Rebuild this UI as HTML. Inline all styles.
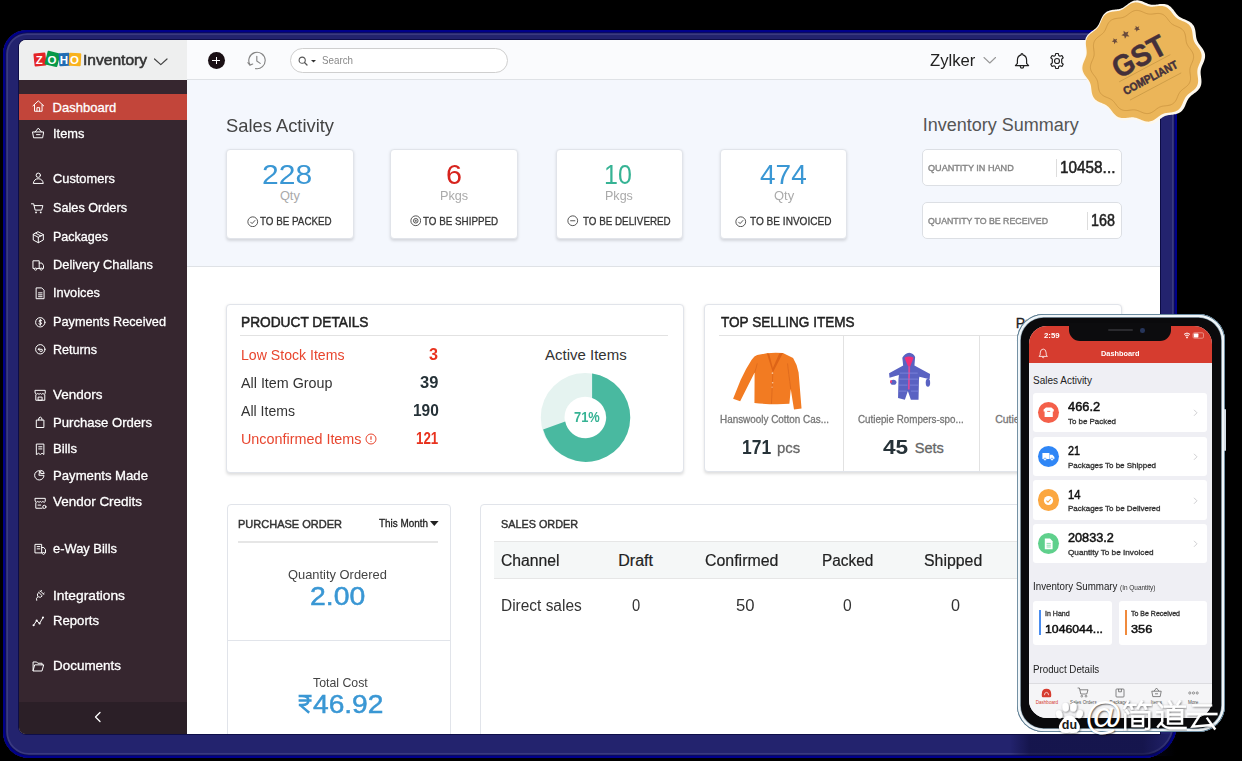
<!DOCTYPE html>
<html><head><meta charset="utf-8"><title>Zoho Inventory</title><style>
html,body{margin:0;padding:0;background:#000;}
body{width:1242px;height:761px;position:relative;overflow:hidden;font-family:"Liberation Sans",sans-serif;}
div,svg,span.t{position:absolute;box-sizing:border-box;}
span.t{white-space:nowrap;line-height:1;display:inline-block;}
</style></head>
<body>
<div style="left:3.00px;top:30.00px;width:1174.00px;height:728.00px;background:#23236e;border-radius:24px 20px 34px 26px;box-shadow:inset 0 0 0 2.2px #00008a, inset 0 0 0 3.2px #0c0c55, inset 0 0 0 5px #3a3a80;"></div>
<div id="win" style="left:19px;top:39.5px;width:1141px;height:694.3px;overflow:hidden;background:#fff;border-radius:7px 0 0 7px;box-shadow:0 0 0 0.8px #08083c;"><div style="left:168.00px;top:40.00px;width:974.00px;height:187.00px;background:#f4f7fd;"></div>
<div style="left:168.00px;top:226.50px;width:974.00px;height:1.00px;background:#dfe2e6;"></div>
<div style="left:0.00px;top:0.00px;width:168.00px;height:40.00px;background:#eeefef;"></div>
<div style="left:168.00px;top:0.00px;width:974.00px;height:40.60px;background:#fafbfd;border-bottom:1.6px solid #dfe2e6;"></div>
<div style="left:0.00px;top:40.00px;width:168.00px;height:655.00px;background:#36262f;"></div>
<div style="left:0.00px;top:54.50px;width:168.00px;height:26.00px;background:#c2453a;"></div>
<div style="left:0.00px;top:662.30px;width:168.00px;height:33.00px;background:#2b1f27;"></div>
<svg style="left:74.00px;top:671.50px;" width="10" height="12" viewBox="0 0 10 12"><path d="M7 1.5 L2.5 6 L7 10.5" fill="none" stroke="#fff" stroke-width="1.3" stroke-linecap="round" stroke-linejoin="round"/></svg>
<span id="t0" class="t" style="left:33.60px;transform-origin:0 50%;top:61.05px;font-size:13px;color:#fff;font-weight:normal;-webkit-text-stroke:0.3px;">Dashboard</span>
<svg style="left:13.20px;top:60.60px;" width="12.6" height="12.6" viewBox="0 0 14 14"><path fill="none" stroke="#fff" stroke-width="1.1" stroke-linecap="round" stroke-linejoin="round" d="M1 6.5 L7 1 L13 6.5 M2.8 5.5 V12.5 H11.2 V5.5 M5.5 12.5 V8.5 H8.5 V12.5"/></svg>
<span id="t1" class="t" style="left:33.60px;transform-origin:0 50%;top:87.45px;font-size:13px;color:#fff;font-weight:normal;-webkit-text-stroke:0.3px;transform:scaleX(0.9875);">Items</span>
<svg style="left:12.90px;top:87.20px;" width="12.6" height="12.6" viewBox="0 0 14 14"><path fill="none" stroke="#fff" stroke-width="1.1" stroke-linecap="round" stroke-linejoin="round" d="M1 5.5 H13 L11.8 12 H2.2 Z M3.5 5.5 L7 1.2 L10.5 5.5 M5 8.5 H9"/></svg>
<span id="t2" class="t" style="left:33.60px;transform-origin:0 50%;top:132.85px;font-size:13px;color:#fff;font-weight:normal;-webkit-text-stroke:0.3px;transform:scaleX(0.9863);">Customers</span>
<svg style="left:12.90px;top:132.50px;" width="12.6" height="12.6" viewBox="0 0 14 14"><circle fill="none" stroke="#fff" stroke-width="1.1" stroke-linecap="round" stroke-linejoin="round" cx="7" cy="3.6" r="2.4"/><path fill="none" stroke="#fff" stroke-width="1.1" stroke-linecap="round" stroke-linejoin="round" d="M1.5 12.3 Q2.3 7.5 7 7.5 Q11.7 7.5 12.5 12.3 Z"/></svg>
<span id="t3" class="t" style="left:33.60px;transform-origin:0 50%;top:161.85px;font-size:13px;color:#fff;font-weight:normal;-webkit-text-stroke:0.3px;transform:scaleX(0.9753);">Sales Orders</span>
<svg style="left:12.10px;top:162.70px;" width="12.6" height="12.6" viewBox="0 0 14 14"><path fill="none" stroke="#fff" stroke-width="1.1" stroke-linecap="round" stroke-linejoin="round" d="M0.5 2 H3 L4.6 9 H11.8 L13.2 4 H3.5"/><circle cx="5.6" cy="11.6" r="1" fill="#fff"/><circle cx="10.8" cy="11.6" r="1" fill="#fff"/></svg>
<span id="t4" class="t" style="left:33.60px;transform-origin:0 50%;top:190.25px;font-size:13px;color:#fff;font-weight:normal;-webkit-text-stroke:0.3px;transform:scaleX(0.9633);">Packages</span>
<svg style="left:13.40px;top:191.70px;" width="12.6" height="12.6" viewBox="0 0 14 14"><path fill="none" stroke="#fff" stroke-width="1.1" stroke-linecap="round" stroke-linejoin="round" d="M7 1 L12.6 4 V10 L7 13 L1.4 10 V4 Z M1.4 4 L7 7 L12.6 4 M7 7 V13 M4.2 2.5 L9.8 5.5"/></svg>
<span id="t5" class="t" style="left:33.60px;transform-origin:0 50%;top:218.95px;font-size:13px;color:#fff;font-weight:normal;-webkit-text-stroke:0.3px;transform:scaleX(0.9886);">Delivery Challans</span>
<svg style="left:13.40px;top:219.70px;" width="12.6" height="12.6" viewBox="0 0 14 14"><path fill="none" stroke="#fff" stroke-width="1.1" stroke-linecap="round" stroke-linejoin="round" d="M1.5 2 H8 V10.5 H1.5 Z M8 4.5 H11 L12.8 7.2 V10.5 H8"/><circle cx="4" cy="11.3" r="1.2" fill="#36262f" stroke="#fff"/><circle cx="10.3" cy="11.3" r="1.2" fill="#36262f" stroke="#fff"/></svg>
<span id="t6" class="t" style="left:33.60px;transform-origin:0 50%;top:246.45px;font-size:13px;color:#fff;font-weight:normal;-webkit-text-stroke:0.3px;transform:scaleX(0.9853);">Invoices</span>
<svg style="left:14.70px;top:247.50px;" width="12.6" height="12.6" viewBox="0 0 14 14"><path fill="none" stroke="#fff" stroke-width="1.1" stroke-linecap="round" stroke-linejoin="round" d="M2.8 1 H8.6 L11.2 3.6 V13 H2.8 Z M5 6.5 H9 M5 8.7 H9 M5 10.8 H9"/></svg>
<span id="t7" class="t" style="left:33.60px;transform-origin:0 50%;top:275.45px;font-size:13px;color:#fff;font-weight:normal;-webkit-text-stroke:0.3px;transform:scaleX(0.9773);">Payments Received</span>
<svg style="left:14.90px;top:276.30px;" width="12.6" height="12.6" viewBox="0 0 14 14"><circle fill="none" stroke="#fff" stroke-width="1.1" stroke-linecap="round" stroke-linejoin="round" cx="7" cy="7" r="5.2"/><path fill="none" stroke="#fff" stroke-width="1.1" stroke-linecap="round" stroke-linejoin="round" d="M8.6 5.2 Q7 4 5.8 5.2 Q5.2 6.6 7 7 Q8.8 7.4 8.2 8.8 Q7 10 5.4 8.8 M7 3.6 V10.4"/></svg>
<span id="t8" class="t" style="left:33.60px;transform-origin:0 50%;top:303.15px;font-size:13px;color:#fff;font-weight:normal;-webkit-text-stroke:0.3px;transform:scaleX(0.9664);">Returns</span>
<svg style="left:14.90px;top:303.60px;" width="12.6" height="12.6" viewBox="0 0 14 14"><circle fill="none" stroke="#fff" stroke-width="1.1" stroke-linecap="round" stroke-linejoin="round" cx="7" cy="7" r="5.2"/><path fill="none" stroke="#fff" stroke-width="1.1" stroke-linecap="round" stroke-linejoin="round" d="M4.8 7 H9 Q10 8 9 9.2 H7 M6 5.6 L4.6 7 L6 8.4"/></svg>
<span id="t9" class="t" style="left:33.60px;transform-origin:0 50%;top:348.95px;font-size:13px;color:#fff;font-weight:normal;-webkit-text-stroke:0.3px;transform:scaleX(1.0356);">Vendors</span>
<svg style="left:14.90px;top:349.50px;" width="12.6" height="12.6" viewBox="0 0 14 14"><path fill="none" stroke="#fff" stroke-width="1.1" stroke-linecap="round" stroke-linejoin="round" d="M2 6.5 V12.5 H12 V6.5 M1.5 1.5 H12.5 V5 Q11.5 6.8 9.8 5 Q8.4 6.8 7 5 Q5.6 6.8 4.2 5 Q2.5 6.8 1.5 5 Z M5 9 H9 V12.5 H5 Z"/></svg>
<span id="t10" class="t" style="left:33.60px;transform-origin:0 50%;top:376.05px;font-size:13px;color:#fff;font-weight:normal;-webkit-text-stroke:0.3px;transform:scaleX(1.0075);">Purchase Orders</span>
<svg style="left:14.70px;top:376.30px;" width="12.6" height="12.6" viewBox="0 0 14 14"><path fill="none" stroke="#fff" stroke-width="1.1" stroke-linecap="round" stroke-linejoin="round" d="M3 4.5 H11 V12.8 H3 Z M5 4.5 Q5 1.2 7 1.2 Q9 1.2 9 4.5"/></svg>
<span id="t11" class="t" style="left:33.60px;transform-origin:0 50%;top:402.75px;font-size:13px;color:#fff;font-weight:normal;-webkit-text-stroke:0.3px;transform:scaleX(1.0066);">Bills</span>
<svg style="left:14.50px;top:403.00px;" width="12.6" height="12.6" viewBox="0 0 14 14"><path fill="none" stroke="#fff" stroke-width="1.1" stroke-linecap="round" stroke-linejoin="round" d="M3 1.2 H11 V12.8 L9 11.4 L7 12.8 L5 11.4 L3 12.8 Z M5.2 4.2 H8.8 M5.2 6.6 H8.8"/></svg>
<span id="t12" class="t" style="left:33.60px;transform-origin:0 50%;top:429.25px;font-size:13px;color:#fff;font-weight:normal;-webkit-text-stroke:0.3px;transform:scaleX(1.0113);">Payments Made</span>
<svg style="left:14.20px;top:429.50px;" width="12.6" height="12.6" viewBox="0 0 14 14"><path fill="none" stroke="#fff" stroke-width="1.1" stroke-linecap="round" stroke-linejoin="round" d="M7 1.8 A5.2 5.2 0 1 0 12.2 7 H7 Z M9 1.5 A4 4 0 0 1 12.5 5 H9 Z"/></svg>
<span id="t13" class="t" style="left:33.60px;transform-origin:0 50%;top:455.95px;font-size:13px;color:#fff;font-weight:normal;-webkit-text-stroke:0.3px;transform:scaleX(1.0349);">Vendor Credits</span>
<svg style="left:15.20px;top:457.20px;" width="12.6" height="12.6" viewBox="0 0 14 14"><path fill="none" stroke="#fff" stroke-width="1.1" stroke-linecap="round" stroke-linejoin="round" d="M2 6.5 V12.5 H9 M1.5 1.5 H12.5 V5 Q11.5 6.8 9.8 5 Q8.4 6.8 7 5 Q5.6 6.8 4.2 5 Q2.5 6.8 1.5 5 Z M4.5 9 H7.5"/><circle fill="none" stroke="#fff" stroke-width="1.1" stroke-linecap="round" stroke-linejoin="round" cx="11.5" cy="11" r="1.8"/></svg>
<span id="t14" class="t" style="left:33.60px;transform-origin:0 50%;top:502.45px;font-size:13px;color:#fff;font-weight:normal;-webkit-text-stroke:0.3px;transform:scaleX(0.9918);">e-Way Bills</span>
<svg style="left:15.20px;top:503.10px;" width="12.6" height="12.6" viewBox="0 0 14 14"><path fill="none" stroke="#fff" stroke-width="1.1" stroke-linecap="round" stroke-linejoin="round" d="M1.5 1.5 H8.5 V11 H1.5 Z M8.5 5 H11 L12.8 7.5 V11 H8.5 M3.5 4 H6.5 M3.5 6.5 H6.5"/><circle cx="10.6" cy="11.6" r="1.1" fill="#36262f" stroke="#fff"/></svg>
<span id="t15" class="t" style="left:33.60px;transform-origin:0 50%;top:549.05px;font-size:13px;color:#fff;font-weight:normal;-webkit-text-stroke:0.3px;transform:scaleX(1.0598);">Integrations</span>
<svg style="left:14.10px;top:549.30px;" width="12.6" height="12.6" viewBox="0 0 14 14"><path fill="none" stroke="#fff" stroke-width="1.1" stroke-linecap="round" stroke-linejoin="round" d="M8.2 2.2 L11.8 5.8 M6.5 3.8 L10.2 7.5 Q9 10.2 6 8.8 L5.2 8 Q3.8 5 6.5 3.8 M9.4 1.5 L8.2 2.8 M12.5 4.6 L11.3 5.8 M5.2 8.8 Q3 10 4 12.6"/></svg>
<span id="t16" class="t" style="left:33.60px;transform-origin:0 50%;top:574.65px;font-size:13px;color:#fff;font-weight:normal;-webkit-text-stroke:0.3px;transform:scaleX(1.0103);">Reports</span>
<svg style="left:13.00px;top:575.10px;" width="12.6" height="12.6" viewBox="0 0 14 14"><path fill="none" stroke="#fff" stroke-width="1.1" stroke-linecap="round" stroke-linejoin="round" d="M1.8 11.4 L5.2 6.2 L8.4 9.4 L12.2 2.8"/><circle cx="1.8" cy="11.4" r="1.2" fill="#fff"/><circle cx="5.2" cy="6.2" r="1.2" fill="#fff"/><circle cx="8.4" cy="9.4" r="1.2" fill="#fff"/><circle cx="12.2" cy="2.8" r="1.2" fill="#fff"/></svg>
<span id="t17" class="t" style="left:33.60px;transform-origin:0 50%;top:619.85px;font-size:13px;color:#fff;font-weight:normal;-webkit-text-stroke:0.3px;transform:scaleX(1.0342);">Documents</span>
<svg style="left:13.00px;top:620.30px;" width="12.6" height="12.6" viewBox="0 0 14 14"><path fill="none" stroke="#fff" stroke-width="1.1" stroke-linecap="round" stroke-linejoin="round" d="M1.2 11.8 V2.2 H5.2 L6.4 3.6 H11.2 V5.4 M1.2 11.8 L3 5.4 H13 L11.2 11.8 Z"/></svg>
<div style="left:14.70px;top:13.70px;width:12.20px;height:13.20px;background:#e42527;transform:rotate(-6deg);border-radius:1px;"></div>
<div style="left:26.60px;top:12.10px;width:13.40px;height:13.60px;background:#089949;transform:rotate(14deg);border-radius:1px;"></div>
<div style="left:39.60px;top:13.50px;width:10.80px;height:13.00px;background:#226db4;transform:rotate(-4deg);border-radius:1px;"></div>
<div style="left:49.80px;top:13.90px;width:11.80px;height:13.00px;background:#f9b21d;transform:rotate(3deg);border-radius:1px;"></div>
<span id="t18" class="t" style="left:16.80px;transform-origin:0 50%;top:15.13px;font-size:11.5px;color:#fff;font-weight:bold;">Z</span>
<span id="t19" class="t" style="left:28.60px;transform-origin:0 50%;top:15.13px;font-size:11.5px;color:#fff;font-weight:bold;">O</span>
<span id="t20" class="t" style="left:40.70px;transform-origin:0 50%;top:15.13px;font-size:11.5px;color:#fff;font-weight:bold;">H</span>
<span id="t21" class="t" style="left:51.10px;transform-origin:0 50%;top:15.13px;font-size:11.5px;color:#fff;font-weight:bold;">O</span>
<span id="t22" class="t" style="left:64.00px;transform-origin:0 50%;top:12.75px;font-size:15px;color:#333;font-weight:normal;-webkit-text-stroke:0.3px;transform:scaleX(1.0372);-webkit-text-stroke:0.55px;">Inventory</span>
<svg style="left:134.00px;top:17.50px;" width="16" height="10" viewBox="0 0 16 10"><path d="M1.5 2 L7.8 7.6 L14 2" fill="none" stroke="#444" stroke-width="1.2" stroke-linecap="round" stroke-linejoin="round"/></svg>
<div style="left:188.95px;top:12.65px;width:16.90px;height:16.90px;background:#1a1015;border-radius:50%;"></div>
<div style="left:193.40px;top:20.40px;width:7.80px;height:1.30px;background:#fff;"></div>
<div style="left:196.65px;top:17.10px;width:1.30px;height:7.80px;background:#fff;"></div>
<svg style="left:228.00px;top:11.50px;" width="20" height="19" viewBox="0 0 20 19"><path d="M2.9 13.6 A8.2 8.2 0 1 1 8.58 17.58" fill="none" stroke="#858585" stroke-width="1.15" stroke-linecap="round"/><path d="M0.9 11.6 L2.9 14.1 L5.7 13" fill="none" stroke="#858585" stroke-width="1.15" stroke-linecap="round" stroke-linejoin="round"/><path d="M9.8 5.2 V10 L13.2 12.4" fill="none" stroke="#858585" stroke-width="1.15" stroke-linecap="round" stroke-linejoin="round"/></svg>
<div style="left:271.00px;top:8.50px;width:218.20px;height:25.00px;background:#fff;border:1px solid #cfcfcf;border-radius:13px;"></div>
<svg style="left:279.00px;top:16.00px;" width="10" height="10" viewBox="0 0 10 10"><circle cx="4.2" cy="4.2" r="3.1" fill="none" stroke="#555" stroke-width="1.1"/><path d="M6.5 6.5 L9 9" stroke="#555" stroke-width="1.3" stroke-linecap="round"/></svg>
<svg style="left:291.50px;top:20.10px;" width="5" height="3" viewBox="0 0 5 3"><path d="M0 0 H5 L2.5 2.6 Z" fill="#333"/></svg>
<span id="t23" class="t" style="left:303.40px;transform-origin:0 50%;top:15.88px;font-size:10.5px;color:#888;font-weight:normal;transform:scaleX(0.9315);">Search</span>
<span id="t24" class="t" style="left:910.50px;transform-origin:0 50%;top:12.48px;font-size:16.5px;color:#222;font-weight:normal;transform:scaleX(1.0106);">Zylker</span>
<svg style="left:963.50px;top:16.50px;" width="14" height="9" viewBox="0 0 14 9"><path d="M1 1.5 L6.8 7 L12.5 1.5" fill="none" stroke="#999" stroke-width="1.1" stroke-linecap="round" stroke-linejoin="round"/></svg>
<svg style="left:994.00px;top:12.00px;" width="18" height="18" viewBox="0 0 18 18"><path d="M9 1.6 Q9.9 1.6 9.9 2.8 Q13.6 3.8 13.6 8.2 V11.4 L15.6 13.6 H2.4 L4.4 11.4 V8.2 Q4.4 3.8 8.1 2.8 Q8.1 1.6 9 1.6 Z M7.2 14.2 Q7.4 16.2 9 16.2 Q10.6 16.2 10.8 14.2" fill="none" stroke="#222" stroke-width="1.2" stroke-linejoin="round"/></svg>
<svg style="left:1028.70px;top:12.00px;" width="18" height="18" viewBox="0 0 18 18"><g fill="none" stroke="#222" stroke-width="1.2" stroke-linejoin="round"><circle cx="9" cy="9" r="2.5"/><path d="M7.7 1.5 H10.3 L10.7 3.5 L12 4.2 L13.9 3.5 L15.2 5.7 L13.7 7.1 V8.6 V10.9 L15.2 12.3 L13.9 14.5 L12 13.8 L10.7 14.5 L10.3 16.5 H7.7 L7.3 14.5 L6 13.8 L4.1 14.5 L2.8 12.3 L4.3 10.9 V7.1 L2.8 5.7 L4.1 3.5 L6 4.2 L7.3 3.5 Z"/></g></svg>
<span id="t25" class="t" style="left:207.00px;transform-origin:0 50%;top:77.38px;font-size:18.5px;color:#444;font-weight:normal;transform:scaleX(0.9908);">Sales Activity</span>
<div style="left:206.50px;top:109.50px;width:128.80px;height:89.70px;background:#fff;border:1px solid #e1e4ea;border-radius:4px;box-shadow:0 1.5px 3px rgba(0,0,0,.13);"></div>
<span id="t26" class="t" style="left:243.00px;transform-origin:0 50%;top:121.72px;font-size:27.5px;color:#3a97d4;font-weight:normal;transform:scaleX(1.0939);">228</span>
<span id="t27" class="t" style="left:260.90px;transform-origin:0 50%;top:150.92px;font-size:12.8px;color:#aaa;font-weight:normal;">Qty</span>
<span id="t28" class="t" style="left:241.00px;transform-origin:0 50%;top:175.64px;font-size:11.6px;color:#333;font-weight:normal;-webkit-text-stroke:0.3px;transform:scaleX(0.8473);">TO BE PACKED</span>
<svg style="left:228.00px;top:176.30px;" width="11.5" height="11.5" viewBox="0 0 11.5 11.5"><circle cx="5.75" cy="5.75" r="4.9" fill="none" stroke="#444" stroke-width="0.9"/><path d="M3.4 5.9 L5.1 7.6 L8.2 4.2" fill="none" stroke="#444" stroke-width="0.9"/></svg>
<div style="left:370.70px;top:109.50px;width:128.80px;height:89.70px;background:#fff;border:1px solid #e1e4ea;border-radius:4px;box-shadow:0 1.5px 3px rgba(0,0,0,.13);"></div>
<span id="t29" class="t" style="left:427.00px;transform-origin:0 50%;top:121.72px;font-size:27.5px;color:#d7231d;font-weight:normal;transform:scaleX(1.0460);">6</span>
<span id="t30" class="t" style="left:421.00px;transform-origin:0 50%;top:150.92px;font-size:12.8px;color:#aaa;font-weight:normal;transform:scaleX(0.9911);">Pkgs</span>
<span id="t31" class="t" style="left:403.50px;transform-origin:0 50%;top:175.24px;font-size:11.6px;color:#333;font-weight:normal;-webkit-text-stroke:0.3px;transform:scaleX(0.8478);">TO BE SHIPPED</span>
<svg style="left:390.80px;top:175.90px;" width="11.5" height="11.5" viewBox="0 0 11.5 11.5"><circle cx="5.75" cy="5.75" r="4.9" fill="none" stroke="#444" stroke-width="0.9"/><circle cx="5.75" cy="5.75" r="2.3" fill="none" stroke="#444" stroke-width="0.9"/><path d="M4.6 5.8 H6.9 M5.75 4.6 V6.9" stroke="#444" stroke-width="0.7"/></svg>
<div style="left:536.50px;top:109.50px;width:127.70px;height:89.70px;background:#fff;border:1px solid #e1e4ea;border-radius:4px;box-shadow:0 1.5px 3px rgba(0,0,0,.13);"></div>
<span id="t32" class="t" style="left:584.90px;transform-origin:0 50%;top:121.72px;font-size:27.5px;color:#36b394;font-weight:normal;transform:scaleX(0.9087);">10</span>
<span id="t33" class="t" style="left:585.60px;transform-origin:0 50%;top:150.92px;font-size:12.8px;color:#aaa;font-weight:normal;transform:scaleX(0.9806);">Pkgs</span>
<span id="t34" class="t" style="left:563.50px;transform-origin:0 50%;top:175.14px;font-size:11.6px;color:#333;font-weight:normal;-webkit-text-stroke:0.3px;transform:scaleX(0.8471);">TO BE DELIVERED</span>
<svg style="left:548.40px;top:175.80px;" width="11.5" height="11.5" viewBox="0 0 11.5 11.5"><circle cx="5.75" cy="5.75" r="4.9" fill="none" stroke="#444" stroke-width="0.9"/><path d="M3.2 5.75 H8.3" stroke="#444" stroke-width="0.9"/></svg>
<div style="left:700.90px;top:109.50px;width:127.50px;height:89.70px;background:#fff;border:1px solid #e1e4ea;border-radius:4px;box-shadow:0 1.5px 3px rgba(0,0,0,.13);"></div>
<span id="t35" class="t" style="left:741.00px;transform-origin:0 50%;top:121.72px;font-size:27.5px;color:#3a97d4;font-weight:normal;transform:scaleX(1.0176);">474</span>
<span id="t36" class="t" style="left:755.30px;transform-origin:0 50%;top:150.92px;font-size:12.8px;color:#aaa;font-weight:normal;transform:scaleX(1.0140);">Qty</span>
<span id="t37" class="t" style="left:730.90px;transform-origin:0 50%;top:175.64px;font-size:11.6px;color:#333;font-weight:normal;-webkit-text-stroke:0.3px;transform:scaleX(0.8685);">TO BE INVOICED</span>
<svg style="left:716.30px;top:176.30px;" width="11.5" height="11.5" viewBox="0 0 11.5 11.5"><circle cx="5.75" cy="5.75" r="4.9" fill="none" stroke="#444" stroke-width="0.9"/><path d="M3.4 5.9 L5.1 7.6 L8.2 4.2" fill="none" stroke="#444" stroke-width="0.9"/></svg>
<span id="t38" class="t" style="left:903.80px;transform-origin:0 50%;top:76.70px;font-size:18px;color:#555;font-weight:normal;">Inventory Summary</span>
<div style="left:903.40px;top:109.80px;width:199.30px;height:36.60px;background:#fff;border:1px solid #dcdfe4;border-radius:5px;"></div>
<div style="left:903.40px;top:162.70px;width:199.30px;height:36.60px;background:#fff;border:1px solid #dcdfe4;border-radius:5px;"></div>
<span id="t39" class="t" style="left:908.80px;transform-origin:0 50%;top:123.67px;font-size:9.8px;color:#858585;font-weight:normal;-webkit-text-stroke:0.3px;transform:scaleX(0.9279);-webkit-text-stroke:0.4px;">QUANTITY IN HAND</span>
<span id="t40" class="t" style="left:908.80px;transform-origin:0 50%;top:176.27px;font-size:9.8px;color:#858585;font-weight:normal;-webkit-text-stroke:0.3px;transform:scaleX(0.8959);-webkit-text-stroke:0.4px;">QUANTITY TO BE RECEIVED</span>
<div style="left:1037.20px;top:119.50px;width:1.00px;height:17.50px;background:#ddd;"></div>
<div style="left:1068.00px;top:172.50px;width:1.00px;height:17.50px;background:#ddd;"></div>
<span id="t41" class="t" style="left:1040.80px;transform-origin:0 50%;top:120.60px;font-size:16px;color:#222;font-weight:normal;-webkit-text-stroke:0.3px;transform:scaleX(0.9580);-webkit-text-stroke:0.5px;">10458...</span>
<span id="t42" class="t" style="left:1072.30px;transform-origin:0 50%;top:173.10px;font-size:16px;color:#222;font-weight:normal;-webkit-text-stroke:0.3px;transform:scaleX(0.8950);-webkit-text-stroke:0.5px;">168</span>
<div style="left:206.60px;top:264.90px;width:458.80px;height:168.20px;background:#fff;border:1px solid #e1e4ea;border-radius:4px;box-shadow:0 1.5px 3px rgba(0,0,0,.13);"></div>
<span id="t43" class="t" style="left:221.50px;transform-origin:0 50%;top:275.70px;font-size:14.7px;color:#222;font-weight:normal;-webkit-text-stroke:0.3px;transform:scaleX(0.9336);-webkit-text-stroke:0.5px;">PRODUCT DETAILS</span>
<div style="left:221.00px;top:295.10px;width:428.00px;height:1.00px;background:#e2e2e2;"></div>
<span id="t44" class="t" style="left:221.50px;transform-origin:0 50%;top:307.25px;font-size:15px;color:#e8452e;font-weight:normal;transform:scaleX(0.9405);">Low Stock Items</span>
<span id="t45" class="t" style="left:410.30px;transform-origin:0 50%;top:307.10px;font-size:16px;color:#e8321e;font-weight:bold;transform:scaleX(1.0105);">3</span>
<span id="t46" class="t" style="left:221.50px;transform-origin:0 50%;top:335.75px;font-size:15px;color:#333;font-weight:normal;transform:scaleX(0.9544);">All Item Group</span>
<span id="t47" class="t" style="left:401.00px;transform-origin:0 50%;top:335.60px;font-size:16px;color:#263238;font-weight:bold;transform:scaleX(1.0283);">39</span>
<span id="t48" class="t" style="left:221.50px;transform-origin:0 50%;top:363.55px;font-size:15px;color:#333;font-weight:normal;transform:scaleX(0.9389);">All Items</span>
<span id="t49" class="t" style="left:393.50px;transform-origin:0 50%;top:363.40px;font-size:16px;color:#263238;font-weight:bold;transform:scaleX(0.9662);">190</span>
<span id="t50" class="t" style="left:221.50px;transform-origin:0 50%;top:391.55px;font-size:15px;color:#e8452e;font-weight:normal;transform:scaleX(0.9573);">Unconfirmed Items</span>
<span id="t51" class="t" style="left:397.00px;transform-origin:0 50%;top:391.40px;font-size:16px;color:#e8321e;font-weight:bold;transform:scaleX(0.8351);">121</span>
<svg style="left:346.30px;top:393.50px;" width="12" height="12" viewBox="0 0 12 12"><circle cx="6" cy="6" r="5" fill="none" stroke="#e8452e" stroke-width="1"/><path d="M6 3.2 V6.8 M6 8.2 V9" stroke="#e8452e" stroke-width="1.2"/></svg>
<span id="t52" class="t" style="left:526.00px;transform-origin:0 50%;top:307.25px;font-size:15px;color:#333;font-weight:normal;">Active Items</span>
<svg style="left:521.00px;top:332.50px;" width="91" height="91" viewBox="0 0 91 91"><circle cx="45.2" cy="45.4" r="32.55" fill="none" stroke="#e5f3f0" stroke-width="23.7"/><path d="M52.1 1.54 A44.4 44.4 0 1 1 3.1 57.5 L25.2 49.6 A20.7 20.7 0 1 0 52.1 25.9 Z" fill="#49b9a0"/></svg>
<span id="t53" class="t" style="left:554.90px;transform-origin:0 50%;top:370.50px;font-size:14px;color:#36b394;font-weight:bold;transform:scaleX(0.9204);">71%</span>
<div style="left:685.00px;top:264.90px;width:417.80px;height:167.60px;background:#fff;border:1px solid #e1e4ea;border-radius:4px;box-shadow:0 1.5px 3px rgba(0,0,0,.13);"></div>
<span id="t54" class="t" style="left:701.80px;transform-origin:0 50%;top:275.61px;font-size:14.7px;color:#222;font-weight:normal;-webkit-text-stroke:0.3px;transform:scaleX(0.9230);-webkit-text-stroke:0.5px;">TOP SELLING ITEMS</span>
<span id="t55" class="t" style="left:996.70px;transform-origin:0 50%;top:276.00px;font-size:14px;color:#222;font-weight:normal;-webkit-text-stroke:0.3px;">Pr</span>
<div style="left:700.00px;top:295.30px;width:403.00px;height:1.00px;background:#e2e2e2;"></div>
<div style="left:824.00px;top:295.50px;width:1.00px;height:136.00px;background:#e2e2e2;"></div>
<div style="left:960.00px;top:295.50px;width:1.00px;height:136.00px;background:#e2e2e2;"></div>
<svg style="left:706.00px;top:305.50px;" width="85" height="70" viewBox="0 0 924 761"><path d="M455 90 Q540 80 630 88 L740 140 Q790 220 800 300 L832 690 L750 702 L715 480 L700 640 Q500 650 320 630 L322 300 L165 612 L88 585 L170 380 Q230 250 290 160 Q320 120 350 110 Z" fill="#f27b22"/><path d="M455 90 L520 300 L630 88 L590 92 L520 250 L480 95 Z" fill="#dd6417"/><path d="M322 300 Q340 250 350 200 M715 480 Q690 300 680 200 M520 300 L505 640" fill="none" stroke="#de6a1c" stroke-width="10"/><circle cx="516" cy="306" r="9" fill="#f8c9a0"/><circle cx="518" cy="410" r="9" fill="#f8c9a0"/><circle cx="512" cy="458" r="8" fill="#f5b584"/></svg>
<svg style="left:856.00px;top:305.50px;" width="70" height="65" viewBox="0 0 820 761"><path d="M400 90 Q450 95 470 140 L462 240 L645 340 L640 400 L520 372 L515 400 L510 640 L420 642 L385 540 L350 642 L270 622 L275 400 L280 352 L170 382 L165 330 L330 240 L320 150 Q350 95 400 90 Z" fill="#5962c2"/><ellipse cx="215" cy="436" rx="36" ry="30" fill="#5962c2"/><ellipse cx="620" cy="442" rx="26" ry="46" fill="#5962c2"/><ellipse cx="188" cy="427" rx="12" ry="18" fill="#e8407e"/><path d="M345 150 Q400 118 452 150 L412 252 L388 252 Z" fill="#f0307a"/><path d="M390 250 H412 L406 522 H386 Z" fill="#d84a9a"/><path d="M290 330 H500 M285 400 H505 M282 470 H380 M410 470 H508 M280 540 H370 M420 540 H508" stroke="#7d86dc" stroke-width="14" fill="none" opacity="0.7"/></svg>
<span id="t56" class="t" style="left:701.20px;transform-origin:0 50%;top:374.07px;font-size:10.5px;color:#777;font-weight:normal;-webkit-text-stroke:0.3px;transform:scaleX(0.9432);">Hanswooly Cotton Cas...</span>
<span id="t57" class="t" style="left:838.60px;transform-origin:0 50%;top:374.07px;font-size:10.5px;color:#777;font-weight:normal;-webkit-text-stroke:0.3px;transform:scaleX(0.9336);">Cutiepie Rompers-spo...</span>
<span id="t58" class="t" style="left:976.20px;transform-origin:0 50%;top:374.07px;font-size:10.5px;color:#777;font-weight:normal;-webkit-text-stroke:0.3px;">Cutiepie</span>
<span id="t59" class="t" style="left:722.50px;transform-origin:0 50%;top:396.25px;font-size:21px;color:#263238;font-weight:bold;transform:scaleX(0.8332);">171</span>
<span id="t60" class="t" style="left:757.80px;transform-origin:0 50%;top:401.69px;font-size:14.6px;color:#666;font-weight:normal;-webkit-text-stroke:0.3px;transform:scaleX(1.0212);">pcs</span>
<span id="t61" class="t" style="left:863.80px;transform-origin:0 50%;top:396.25px;font-size:21px;color:#263238;font-weight:bold;transform:scaleX(1.0788);">45</span>
<span id="t62" class="t" style="left:895.70px;transform-origin:0 50%;top:401.69px;font-size:14.6px;color:#666;font-weight:normal;-webkit-text-stroke:0.3px;">Sets</span>
<div style="left:207.50px;top:464.70px;width:224.00px;height:240.00px;background:#fff;border:1px solid #e1e4ea;border-radius:4px;"></div>
<span id="t63" class="t" style="left:219.00px;transform-origin:0 50%;top:479.07px;font-size:11.8px;color:#333;font-weight:normal;-webkit-text-stroke:0.3px;transform:scaleX(0.9333);-webkit-text-stroke:0.45px;">PURCHASE ORDER</span>
<span id="t64" class="t" style="left:360.30px;transform-origin:0 50%;top:478.78px;font-size:10.5px;color:#222;font-weight:normal;-webkit-text-stroke:0.3px;transform:scaleX(0.9434);">This Month</span>
<svg style="left:411.00px;top:481.70px;" width="9" height="6" viewBox="0 0 9 6"><path d="M0 0 H8.6 L4.3 5 Z" fill="#222"/></svg>
<div style="left:219.00px;top:501.70px;width:200.00px;height:1.60px;background:#e6e6e6;"></div>
<div style="left:207.50px;top:600.30px;width:224.00px;height:1.00px;background:#e1e4ea;"></div>
<span id="t65" class="t" style="left:269.30px;transform-origin:0 50%;top:528.82px;font-size:13.5px;color:#444;font-weight:normal;transform:scaleX(0.9550);">Quantity Ordered</span>
<span id="t66" class="t" style="left:291.40px;transform-origin:0 50%;top:543.80px;font-size:26px;color:#3a97d4;font-weight:normal;-webkit-text-stroke:0.3px;transform:scaleX(1.0907);-webkit-text-stroke:0.5px;">2.00</span>
<span id="t67" class="t" style="left:294.00px;transform-origin:0 50%;top:636.23px;font-size:13.5px;color:#444;font-weight:normal;transform:scaleX(0.9129);">Total Cost</span>
<svg style="left:278.60px;top:654.70px;" width="15" height="20" viewBox="0 0 15 20"><path d="M0.6 1.9 H13.6 M0.6 6.6 H13.6 M4 1.9 Q10.4 1.9 10.4 6.4 Q10.4 10.9 4 10.9 H0.8 M2.6 11.4 L11.2 18.8" fill="none" stroke="#3a97d4" stroke-width="2.5"/></svg>
<span id="t68" class="t" style="left:294.20px;transform-origin:0 50%;top:651.60px;font-size:26px;color:#3a97d4;font-weight:normal;-webkit-text-stroke:0.3px;transform:scaleX(1.0818);-webkit-text-stroke:0.5px;">46.92</span>
<div style="left:460.90px;top:464.70px;width:700.00px;height:240.00px;background:#fff;border:1px solid #e1e4ea;border-radius:4px;"></div>
<span id="t69" class="t" style="left:481.60px;transform-origin:0 50%;top:479.17px;font-size:11.8px;color:#333;font-weight:normal;-webkit-text-stroke:0.3px;transform:scaleX(0.9175);-webkit-text-stroke:0.45px;">SALES ORDER</span>
<div style="left:475.30px;top:501.90px;width:680.00px;height:38.00px;background:#f5f7f7;border-top:1px solid #e6e6e6;border-bottom:1px solid #e6e6e6;"></div>
<span id="t70" class="t" style="left:481.60px;transform-origin:0 50%;top:513.50px;font-size:16px;color:#222;font-weight:normal;-webkit-text-stroke:0.2px;transform:scaleX(0.9831);">Channel</span>
<span id="t71" class="t" style="left:599.30px;transform-origin:0 50%;top:513.50px;font-size:16px;color:#222;font-weight:normal;-webkit-text-stroke:0.2px;">Draft</span>
<span id="t72" class="t" style="left:685.90px;transform-origin:0 50%;top:513.50px;font-size:16px;color:#222;font-weight:normal;-webkit-text-stroke:0.2px;transform:scaleX(0.9944);">Confirmed</span>
<span id="t73" class="t" style="left:802.60px;transform-origin:0 50%;top:513.50px;font-size:16px;color:#222;font-weight:normal;-webkit-text-stroke:0.2px;transform:scaleX(0.9630);">Packed</span>
<span id="t74" class="t" style="left:905.40px;transform-origin:0 50%;top:513.50px;font-size:16px;color:#222;font-weight:normal;-webkit-text-stroke:0.2px;transform:scaleX(0.9912);">Shipped</span>
<span id="t75" class="t" style="left:481.60px;transform-origin:0 50%;top:558.60px;font-size:16px;color:#333;font-weight:normal;transform:scaleX(0.9656);">Direct sales</span>
<span id="t76" class="t" style="left:612.80px;transform-origin:0 50%;top:558.60px;font-size:16px;color:#333;font-weight:normal;transform:scaleX(0.9207);">0</span>
<span id="t77" class="t" style="left:716.50px;transform-origin:0 50%;top:558.60px;font-size:16px;color:#333;font-weight:normal;transform:scaleX(1.0395);">50</span>
<span id="t78" class="t" style="left:824.30px;transform-origin:0 50%;top:558.60px;font-size:16px;color:#333;font-weight:normal;transform:scaleX(0.9768);">0</span>
<span id="t79" class="t" style="left:932.00px;transform-origin:0 50%;top:558.60px;font-size:16px;color:#333;font-weight:normal;transform:scaleX(1.0105);">0</span></div>
<div style="left:1010.00px;top:734.30px;width:166.00px;height:21.50px;background:linear-gradient(90deg,rgba(10,10,50,0),rgba(10,10,50,.55) 12%,rgba(10,10,50,.55) 80%,rgba(10,10,50,0));"></div>
<svg style="left:1076.00px;top:-3.70px;" width="134" height="132" viewBox="0 0 134 132"><polygon points="127.62,66.20 127.18,67.25 126.73,68.28 126.29,69.30 125.87,70.30 125.50,71.30 125.19,72.29 124.94,73.29 124.76,74.29 124.66,75.30 124.62,76.32 124.65,77.37 124.73,78.43 124.85,79.51 124.99,80.61 125.14,81.73 125.28,82.85 125.39,83.99 125.44,85.12 125.44,86.25 125.35,87.37 125.18,88.45 124.90,89.51 124.53,90.53 124.05,91.51 123.48,92.44 122.82,93.33 122.08,94.16 121.27,94.95 120.42,95.70 119.53,96.41 118.62,97.10 117.71,97.76 116.82,98.42 115.96,99.09 115.14,99.77 114.37,100.47 113.66,101.21 113.01,101.99 112.41,102.81 111.87,103.68 111.37,104.60 110.91,105.55 110.47,106.55 110.05,107.58 109.62,108.62 109.17,109.66 108.70,110.70 108.18,111.71 107.61,112.68 106.98,113.61 106.28,114.46 105.52,115.24 104.68,115.94 103.78,116.55 102.82,117.07 101.80,117.50 100.75,117.86 99.65,118.14 98.54,118.35 97.41,118.53 96.28,118.67 95.16,118.79 94.06,118.92 92.98,119.06 91.93,119.24 90.92,119.47 89.93,119.75 88.98,120.10 88.05,120.51 87.14,120.99 86.25,121.54 85.37,122.14 84.50,122.78 83.62,123.45 82.73,124.14 81.82,124.83 80.89,125.49 79.93,126.10 78.95,126.66 77.95,127.14 76.91,127.54 75.86,127.83 74.79,128.02 73.71,128.09 72.61,128.06 71.52,127.93 70.42,127.71 69.34,127.40 68.26,127.04 67.20,126.62 66.15,126.18 65.12,125.73 64.10,125.29 63.10,124.87 62.10,124.50 61.11,124.19 60.11,123.94 59.11,123.76 58.10,123.66 57.08,123.62 56.03,123.65 54.97,123.73 53.89,123.85 52.79,123.99 51.67,124.14 50.55,124.28 49.41,124.39 48.28,124.44 47.15,124.44 46.03,124.35 44.95,124.18 43.89,123.90 42.87,123.53 41.89,123.05 40.96,122.48 40.07,121.82 39.24,121.08 38.45,120.27 37.70,119.42 36.99,118.53 36.30,117.62 35.64,116.71 34.98,115.82 34.31,114.96 33.63,114.14 32.93,113.37 32.19,112.66 31.41,112.01 30.59,111.41 29.72,110.87 28.80,110.37 27.85,109.91 26.85,109.47 25.82,109.05 24.78,108.62 23.74,108.17 22.70,107.70 21.69,107.18 20.72,106.61 19.79,105.98 18.94,105.28 18.16,104.52 17.46,103.68 16.85,102.78 16.33,101.82 15.90,100.80 15.54,99.75 15.26,98.65 15.05,97.54 14.87,96.41 14.73,95.28 14.61,94.16 14.48,93.06 14.34,91.98 14.16,90.93 13.93,89.92 13.65,88.93 13.30,87.98 12.89,87.05 12.41,86.14 11.86,85.25 11.26,84.37 10.62,83.50 9.95,82.62 9.26,81.73 8.57,80.82 7.91,79.89 7.30,78.93 6.74,77.95 6.26,76.95 5.86,75.91 5.57,74.86 5.38,73.79 5.31,72.71 5.34,71.61 5.47,70.52 5.69,69.42 6.00,68.34 6.36,67.26 6.78,66.20 7.22,65.15 7.67,64.12 8.11,63.10 8.53,62.10 8.90,61.10 9.21,60.11 9.46,59.11 9.64,58.11 9.74,57.10 9.78,56.08 9.75,55.03 9.67,53.97 9.55,52.89 9.41,51.79 9.26,50.67 9.12,49.55 9.01,48.41 8.96,47.28 8.96,46.15 9.05,45.03 9.22,43.95 9.50,42.89 9.87,41.87 10.35,40.89 10.92,39.96 11.58,39.07 12.32,38.24 13.13,37.45 13.98,36.70 14.87,35.99 15.78,35.30 16.69,34.64 17.58,33.98 18.44,33.31 19.26,32.63 20.03,31.93 20.74,31.19 21.39,30.41 21.99,29.59 22.53,28.72 23.03,27.80 23.49,26.85 23.93,25.85 24.35,24.82 24.78,23.78 25.23,22.74 25.70,21.70 26.22,20.69 26.79,19.72 27.42,18.79 28.12,17.94 28.88,17.16 29.72,16.46 30.62,15.85 31.58,15.33 32.60,14.90 33.65,14.54 34.75,14.26 35.86,14.05 36.99,13.87 38.12,13.73 39.24,13.61 40.34,13.48 41.42,13.34 42.47,13.16 43.48,12.93 44.47,12.65 45.42,12.30 46.35,11.89 47.26,11.41 48.15,10.86 49.03,10.26 49.90,9.62 50.78,8.95 51.67,8.26 52.58,7.57 53.51,6.91 54.47,6.30 55.45,5.74 56.45,5.26 57.49,4.86 58.54,4.57 59.61,4.38 60.69,4.31 61.79,4.34 62.88,4.47 63.98,4.69 65.06,5.00 66.14,5.36 67.20,5.78 68.25,6.22 69.28,6.67 70.30,7.11 71.30,7.53 72.30,7.90 73.29,8.21 74.29,8.46 75.29,8.64 76.30,8.74 77.32,8.78 78.37,8.75 79.43,8.67 80.51,8.55 81.61,8.41 82.73,8.26 83.85,8.12 84.99,8.01 86.12,7.96 87.25,7.96 88.37,8.05 89.45,8.22 90.51,8.50 91.53,8.87 92.51,9.35 93.44,9.92 94.33,10.58 95.16,11.32 95.95,12.13 96.70,12.98 97.41,13.87 98.10,14.78 98.76,15.69 99.42,16.58 100.09,17.44 100.77,18.26 101.47,19.03 102.21,19.74 102.99,20.39 103.81,20.99 104.68,21.53 105.60,22.03 106.55,22.49 107.55,22.93 108.58,23.35 109.62,23.78 110.66,24.23 111.70,24.70 112.71,25.22 113.68,25.79 114.61,26.42 115.46,27.12 116.24,27.88 116.94,28.72 117.55,29.62 118.07,30.58 118.50,31.60 118.86,32.65 119.14,33.75 119.35,34.86 119.53,35.99 119.67,37.12 119.79,38.24 119.92,39.34 120.06,40.42 120.24,41.47 120.47,42.48 120.75,43.47 121.10,44.42 121.51,45.35 121.99,46.26 122.54,47.15 123.14,48.03 123.78,48.90 124.45,49.78 125.14,50.67 125.83,51.58 126.49,52.51 127.10,53.47 127.66,54.45 128.14,55.45 128.54,56.49 128.83,57.54 129.02,58.61 129.09,59.69 129.06,60.79 128.93,61.88 128.71,62.98 128.40,64.06 128.04,65.14" fill="#fdf8ee"/><polygon points="124.21,66.00 123.78,67.01 123.35,68.00 122.92,68.98 122.52,69.95 122.17,70.91 121.87,71.87 121.63,72.83 121.46,73.79 121.35,74.77 121.32,75.75 121.35,76.76 121.42,77.78 121.54,78.82 121.68,79.88 121.82,80.96 121.95,82.04 122.06,83.14 122.11,84.23 122.11,85.32 122.02,86.39 121.85,87.44 121.59,88.46 121.23,89.44 120.77,90.39 120.22,91.28 119.58,92.13 118.87,92.94 118.09,93.70 117.27,94.42 116.41,95.10 115.54,95.76 114.66,96.41 113.80,97.04 112.97,97.68 112.19,98.34 111.44,99.02 110.76,99.73 110.13,100.48 109.55,101.27 109.03,102.11 108.55,102.99 108.11,103.91 107.69,104.87 107.28,105.86 106.86,106.86 106.44,107.87 105.98,108.87 105.48,109.85 104.93,110.78 104.32,111.67 103.65,112.49 102.91,113.25 102.11,113.92 101.24,114.51 100.32,115.01 99.34,115.43 98.32,115.77 97.27,116.03 96.19,116.25 95.10,116.41 94.02,116.55 92.94,116.67 91.88,116.79 90.84,116.93 89.83,117.10 88.85,117.32 87.90,117.59 86.98,117.92 86.08,118.32 85.21,118.79 84.36,119.31 83.51,119.89 82.67,120.51 81.82,121.16 80.96,121.82 80.08,122.48 79.19,123.12 78.27,123.71 77.32,124.25 76.35,124.71 75.36,125.09 74.34,125.37 73.31,125.55 72.27,125.63 71.21,125.60 70.16,125.47 69.11,125.26 68.06,124.96 67.02,124.61 66.00,124.21 64.99,123.78 64.00,123.35 63.02,122.92 62.05,122.52 61.09,122.17 60.13,121.87 59.17,121.63 58.21,121.46 57.23,121.35 56.25,121.32 55.24,121.35 54.22,121.42 53.18,121.54 52.12,121.68 51.04,121.82 49.96,121.95 48.86,122.06 47.77,122.11 46.68,122.11 45.61,122.02 44.56,121.85 43.54,121.59 42.56,121.23 41.61,120.77 40.72,120.22 39.87,119.58 39.06,118.87 38.30,118.09 37.58,117.27 36.90,116.41 36.24,115.54 35.59,114.66 34.96,113.80 34.32,112.97 33.66,112.19 32.98,111.44 32.27,110.76 31.52,110.13 30.73,109.55 29.89,109.03 29.01,108.55 28.09,108.11 27.13,107.69 26.14,107.28 25.14,106.86 24.13,106.44 23.13,105.98 22.15,105.48 21.22,104.93 20.33,104.32 19.51,103.65 18.75,102.91 18.08,102.11 17.49,101.24 16.99,100.32 16.57,99.34 16.23,98.32 15.97,97.27 15.75,96.19 15.59,95.10 15.45,94.02 15.33,92.94 15.21,91.88 15.07,90.84 14.90,89.83 14.68,88.85 14.41,87.90 14.08,86.98 13.68,86.08 13.21,85.21 12.69,84.36 12.11,83.51 11.49,82.67 10.84,81.82 10.18,80.96 9.52,80.08 8.88,79.19 8.29,78.27 7.75,77.32 7.29,76.35 6.91,75.36 6.63,74.34 6.45,73.31 6.37,72.27 6.40,71.21 6.53,70.16 6.74,69.11 7.04,68.06 7.39,67.02 7.79,66.00 8.22,64.99 8.65,64.00 9.08,63.02 9.48,62.05 9.83,61.09 10.13,60.13 10.37,59.17 10.54,58.21 10.65,57.23 10.68,56.25 10.65,55.24 10.58,54.22 10.46,53.18 10.32,52.12 10.18,51.04 10.05,49.96 9.94,48.86 9.89,47.77 9.89,46.68 9.98,45.61 10.15,44.56 10.41,43.54 10.77,42.56 11.23,41.61 11.78,40.72 12.42,39.87 13.13,39.06 13.91,38.30 14.73,37.58 15.59,36.90 16.46,36.24 17.34,35.59 18.20,34.96 19.03,34.32 19.81,33.66 20.56,32.98 21.24,32.27 21.87,31.52 22.45,30.73 22.97,29.89 23.45,29.01 23.89,28.09 24.31,27.13 24.72,26.14 25.14,25.14 25.56,24.13 26.02,23.13 26.52,22.15 27.07,21.22 27.68,20.33 28.35,19.51 29.09,18.75 29.89,18.08 30.76,17.49 31.68,16.99 32.66,16.57 33.68,16.23 34.73,15.97 35.81,15.75 36.90,15.59 37.98,15.45 39.06,15.33 40.12,15.21 41.16,15.07 42.17,14.90 43.15,14.68 44.10,14.41 45.02,14.08 45.92,13.68 46.79,13.21 47.64,12.69 48.49,12.11 49.33,11.49 50.18,10.84 51.04,10.18 51.92,9.52 52.81,8.88 53.73,8.29 54.68,7.75 55.65,7.29 56.64,6.91 57.66,6.63 58.69,6.45 59.73,6.37 60.79,6.40 61.84,6.53 62.89,6.74 63.94,7.04 64.98,7.39 66.00,7.79 67.01,8.22 68.00,8.65 68.98,9.08 69.95,9.48 70.91,9.83 71.87,10.13 72.83,10.37 73.79,10.54 74.77,10.65 75.75,10.68 76.76,10.65 77.78,10.58 78.82,10.46 79.88,10.32 80.96,10.18 82.04,10.05 83.14,9.94 84.23,9.89 85.32,9.89 86.39,9.98 87.44,10.15 88.46,10.41 89.44,10.77 90.39,11.23 91.28,11.78 92.13,12.42 92.94,13.13 93.70,13.91 94.42,14.73 95.10,15.59 95.76,16.46 96.41,17.34 97.04,18.20 97.68,19.03 98.34,19.81 99.02,20.56 99.73,21.24 100.48,21.87 101.27,22.45 102.11,22.97 102.99,23.45 103.91,23.89 104.87,24.31 105.86,24.72 106.86,25.14 107.87,25.56 108.87,26.02 109.85,26.52 110.78,27.07 111.67,27.68 112.49,28.35 113.25,29.09 113.92,29.89 114.51,30.76 115.01,31.68 115.43,32.66 115.77,33.68 116.03,34.73 116.25,35.81 116.41,36.90 116.55,37.98 116.67,39.06 116.79,40.12 116.93,41.16 117.10,42.17 117.32,43.15 117.59,44.10 117.92,45.02 118.32,45.92 118.79,46.79 119.31,47.64 119.89,48.49 120.51,49.33 121.16,50.18 121.82,51.04 122.48,51.92 123.12,52.81 123.71,53.73 124.25,54.68 124.71,55.65 125.09,56.64 125.37,57.66 125.55,58.69 125.63,59.73 125.60,60.79 125.47,61.84 125.26,62.89 124.96,63.94 124.61,64.98" fill="#ebb559"/><polygon points="116.35,66.00 115.98,66.87 115.61,67.73 115.24,68.58 114.89,69.42 114.58,70.25 114.32,71.08 114.12,71.91 113.97,72.74 113.88,73.58 113.85,74.44 113.87,75.31 113.94,76.19 114.04,77.09 114.16,78.01 114.29,78.94 114.40,79.88 114.49,80.82 114.54,81.77 114.53,82.71 114.46,83.64 114.31,84.55 114.09,85.43 113.77,86.28 113.38,87.09 112.90,87.87 112.35,88.61 111.73,89.30 111.06,89.96 110.35,90.58 109.61,91.18 108.85,91.75 108.09,92.30 107.35,92.85 106.63,93.41 105.95,93.97 105.31,94.56 104.72,95.17 104.17,95.82 103.67,96.51 103.22,97.23 102.81,98.00 102.42,98.80 102.06,99.63 101.70,100.48 101.35,101.35 100.98,102.22 100.58,103.08 100.15,103.93 99.67,104.74 99.15,105.50 98.57,106.22 97.93,106.87 97.23,107.45 96.48,107.96 95.68,108.39 94.84,108.75 93.96,109.05 93.04,109.28 92.11,109.46 91.18,109.61 90.24,109.72 89.30,109.83 88.38,109.93 87.49,110.05 86.61,110.20 85.76,110.39 84.94,110.62 84.15,110.91 83.37,111.26 82.62,111.66 81.88,112.11 81.15,112.61 80.42,113.15 79.68,113.71 78.94,114.29 78.18,114.86 77.41,115.40 76.61,115.92 75.79,116.38 74.95,116.79 74.10,117.11 73.22,117.36 72.33,117.51 71.42,117.58 70.51,117.55 69.60,117.44 68.69,117.26 67.78,117.00 66.88,116.70 66.00,116.35 65.13,115.98 64.27,115.61 63.42,115.24 62.58,114.89 61.75,114.58 60.92,114.32 60.09,114.12 59.26,113.97 58.42,113.88 57.56,113.85 56.69,113.87 55.81,113.94 54.91,114.04 53.99,114.16 53.06,114.29 52.12,114.40 51.18,114.49 50.23,114.54 49.29,114.53 48.36,114.46 47.45,114.31 46.57,114.09 45.72,113.77 44.91,113.38 44.13,112.90 43.39,112.35 42.70,111.73 42.04,111.06 41.42,110.35 40.82,109.61 40.25,108.85 39.70,108.09 39.15,107.35 38.59,106.63 38.03,105.95 37.44,105.31 36.83,104.72 36.18,104.17 35.49,103.67 34.77,103.22 34.00,102.81 33.20,102.42 32.37,102.06 31.52,101.70 30.65,101.35 29.78,100.98 28.92,100.58 28.07,100.15 27.26,99.67 26.50,99.15 25.78,98.57 25.13,97.93 24.55,97.23 24.04,96.48 23.61,95.68 23.25,94.84 22.95,93.96 22.72,93.04 22.54,92.11 22.39,91.18 22.28,90.24 22.17,89.30 22.07,88.38 21.95,87.49 21.80,86.61 21.61,85.76 21.38,84.94 21.09,84.15 20.74,83.37 20.34,82.62 19.89,81.88 19.39,81.15 18.85,80.42 18.29,79.68 17.71,78.94 17.14,78.18 16.60,77.41 16.08,76.61 15.62,75.79 15.21,74.95 14.89,74.10 14.64,73.22 14.49,72.33 14.42,71.42 14.45,70.51 14.56,69.60 14.74,68.69 15.00,67.78 15.30,66.88 15.65,66.00 16.02,65.13 16.39,64.27 16.76,63.42 17.11,62.58 17.42,61.75 17.68,60.92 17.88,60.09 18.03,59.26 18.12,58.42 18.15,57.56 18.13,56.69 18.06,55.81 17.96,54.91 17.84,53.99 17.71,53.06 17.60,52.12 17.51,51.18 17.46,50.23 17.47,49.29 17.54,48.36 17.69,47.45 17.91,46.57 18.23,45.72 18.62,44.91 19.10,44.13 19.65,43.39 20.27,42.70 20.94,42.04 21.65,41.42 22.39,40.82 23.15,40.25 23.91,39.70 24.65,39.15 25.37,38.59 26.05,38.03 26.69,37.44 27.28,36.83 27.83,36.18 28.33,35.49 28.78,34.77 29.19,34.00 29.58,33.20 29.94,32.37 30.30,31.52 30.65,30.65 31.02,29.78 31.42,28.92 31.85,28.07 32.33,27.26 32.85,26.50 33.43,25.78 34.07,25.13 34.77,24.55 35.52,24.04 36.32,23.61 37.16,23.25 38.04,22.95 38.96,22.72 39.89,22.54 40.82,22.39 41.76,22.28 42.70,22.17 43.62,22.07 44.51,21.95 45.39,21.80 46.24,21.61 47.06,21.38 47.85,21.09 48.63,20.74 49.38,20.34 50.12,19.89 50.85,19.39 51.58,18.85 52.32,18.29 53.06,17.71 53.82,17.14 54.59,16.60 55.39,16.08 56.21,15.62 57.05,15.21 57.90,14.89 58.78,14.64 59.67,14.49 60.58,14.42 61.49,14.45 62.40,14.56 63.31,14.74 64.22,15.00 65.12,15.30 66.00,15.65 66.87,16.02 67.73,16.39 68.58,16.76 69.42,17.11 70.25,17.42 71.08,17.68 71.91,17.88 72.74,18.03 73.58,18.12 74.44,18.15 75.31,18.13 76.19,18.06 77.09,17.96 78.01,17.84 78.94,17.71 79.88,17.60 80.82,17.51 81.77,17.46 82.71,17.47 83.64,17.54 84.55,17.69 85.43,17.91 86.28,18.23 87.09,18.62 87.87,19.10 88.61,19.65 89.30,20.27 89.96,20.94 90.58,21.65 91.18,22.39 91.75,23.15 92.30,23.91 92.85,24.65 93.41,25.37 93.97,26.05 94.56,26.69 95.17,27.28 95.82,27.83 96.51,28.33 97.23,28.78 98.00,29.19 98.80,29.58 99.63,29.94 100.48,30.30 101.35,30.65 102.22,31.02 103.08,31.42 103.93,31.85 104.74,32.33 105.50,32.85 106.22,33.43 106.87,34.07 107.45,34.77 107.96,35.52 108.39,36.32 108.75,37.16 109.05,38.04 109.28,38.96 109.46,39.89 109.61,40.82 109.72,41.76 109.83,42.70 109.93,43.62 110.05,44.51 110.20,45.39 110.39,46.24 110.62,47.06 110.91,47.85 111.26,48.63 111.66,49.38 112.11,50.12 112.61,50.85 113.15,51.58 113.71,52.32 114.29,53.06 114.86,53.82 115.40,54.59 115.92,55.39 116.38,56.21 116.79,57.05 117.11,57.90 117.36,58.78 117.51,59.67 117.58,60.58 117.55,61.49 117.44,62.40 117.26,63.31 117.00,64.22 116.70,65.12" fill="none" stroke="#cc9641" stroke-width="0.85"/><g transform="translate(66 66) rotate(-28)" font-family="Liberation Sans" fill="#44303a" stroke="#44303a" stroke-width="0.5" text-anchor="middle"><text x="0" y="4" font-size="30" font-weight="bold" textLength="57" lengthAdjust="spacingAndGlyphs">GST</text><text x="0" y="21.6" font-size="11.4" font-weight="bold" textLength="60" lengthAdjust="spacingAndGlyphs">COMPLIANT</text><path d="M-29.5 6.8 H28.5 M-28.5 28 H29.5" stroke="#c0913f" stroke-width="0.6" fill="none"/><polygon points="-14.10,-34.50 -13.25,-32.46 -11.06,-32.29 -12.73,-30.86 -12.22,-28.71 -14.10,-29.86 -15.98,-28.71 -15.47,-30.86 -17.14,-32.29 -14.95,-32.46" fill="#6a4b3c" stroke="none"/><polygon points="-1.60,-36.30 -0.46,-33.57 2.49,-33.33 0.24,-31.40 0.93,-28.52 -1.60,-30.07 -4.13,-28.52 -3.44,-31.40 -5.69,-33.33 -2.74,-33.57" fill="#6a4b3c" stroke="none"/><polygon points="11.30,-35.00 12.15,-32.96 14.34,-32.79 12.67,-31.36 13.18,-29.21 11.30,-30.36 9.42,-29.21 9.93,-31.36 8.26,-32.79 10.45,-32.96" fill="#6a4b3c" stroke="none"/></g></svg>
<div style="left:1016.60px;top:313.60px;width:208.20px;height:418.30px;background:#0a0a0c;border-radius:26.5px;box-shadow:inset 0 0 0 0.7px #3f6882, inset 0 0 0 3.1px #f1f6f9, inset 0 0 0 3.8px #8ea4b2;"></div>
<div style="left:1224.40px;top:409.00px;width:2.00px;height:42.00px;background:#d5dee6;border-radius:1px;"></div>
<div style="left:1028.9px;top:325.8px;width:182.9px;height:392.6px;overflow:hidden;background:#efeff4;border-radius:18px;"><div style="left:-0.90px;top:-0.80px;width:185.00px;height:37.70px;background:#d63c2f;"></div>
<span id="t80" class="t" style="left:15.10px;transform-origin:0 50%;top:6.15px;font-size:7px;color:#fff;font-weight:bold;transform:scaleX(1.1130);">2:59</span>
<span id="t81" class="t" style="left:72.30px;transform-origin:0 50%;top:24.00px;font-size:8px;color:#fff;font-weight:bold;transform:scaleX(0.9187);">Dashboard</span>
<svg style="left:9.10px;top:22.40px;" width="10.5" height="11" viewBox="0 0 10.5 11"><path d="M5.2 1 Q8.2 1.4 8.2 5 V7 L9.4 8.4 H1 L2.2 7 V5 Q2.2 1.4 5.2 1 Z M4.2 9.2 Q5.2 10.4 6.2 9.2" fill="none" stroke="#fff" stroke-width="0.8"/></svg>
<svg style="left:152.10px;top:4.80px;" width="26" height="9" viewBox="0 0 26 9"><path d="M3 3.4 Q6 0.6 9 3.4 M4.2 4.8 Q6 3.2 7.8 4.8" fill="none" stroke="#fff" stroke-width="1"/><circle cx="6" cy="6.4" r="0.9" fill="#fff"/><rect x="12" y="1.8" width="10.5" height="5.4" rx="1.3" fill="none" stroke="#f0b0a8" stroke-width="0.7"/><rect x="12.8" y="2.6" width="4.6" height="3.8" rx="0.6" fill="#fff"/></svg>
<span id="t82" class="t" style="left:4.10px;transform-origin:0 50%;top:50.30px;font-size:10px;color:#222;font-weight:normal;">Sales Activity</span>
<div style="left:4.10px;top:67.20px;width:174.50px;height:39.40px;background:#fff;border-radius:3px;"></div>
<div style="left:9.00px;top:76.20px;width:21.40px;height:21.40px;background:#f4604a;border-radius:50%;"></div>
<svg style="left:14.10px;top:81.40px;" width="11.4" height="11" viewBox="0 0 11.4 11"><path d="M0.6 2.6 L3 0.6 H8.4 L10.8 2.6 V4.6 H9.8 V10 H1.6 V4.6 H0.6 Z" fill="#fff"/><path d="M4.2 4.4 H7.2" stroke="#f4604a" stroke-width="0.9"/></svg>
<span id="t83" class="t" style="left:38.70px;transform-origin:0 50%;top:75.39px;font-size:12.6px;color:#111;font-weight:normal;-webkit-text-stroke:0.3px;transform:scaleX(1.0185);-webkit-text-stroke:0.5px;">466.2</span>
<span id="t84" class="t" style="left:38.70px;transform-origin:0 50%;top:92.21px;font-size:7.4px;color:#333;font-weight:normal;-webkit-text-stroke:0.3px;transform:scaleX(1.0715);">To be Packed</span>
<svg style="left:164.60px;top:83.60px;" width="5" height="7.6" viewBox="0 0 5 7.6"><path d="M1 0.8 L4 3.8 L1 6.8" fill="none" stroke="#c8c8cc" stroke-width="0.9"/></svg>
<div style="left:4.10px;top:110.80px;width:174.50px;height:39.40px;background:#fff;border-radius:3px;"></div>
<div style="left:9.00px;top:119.80px;width:21.40px;height:21.40px;background:#2f86f6;border-radius:50%;"></div>
<svg style="left:13.30px;top:125.80px;" width="13" height="9.5" viewBox="0 0 13 9.5"><path d="M0.4 1 H7.4 V7 H0.4 Z M7.8 2.8 H10.4 L12.4 5 V7 H7.8 Z" fill="#fff"/><circle cx="3" cy="7.4" r="1.3" fill="#fff" stroke="#2f86f6" stroke-width="0.6"/><circle cx="10" cy="7.4" r="1.3" fill="#fff" stroke="#2f86f6" stroke-width="0.6"/></svg>
<span id="t85" class="t" style="left:38.70px;transform-origin:0 50%;top:118.99px;font-size:12.6px;color:#111;font-weight:normal;-webkit-text-stroke:0.3px;transform:scaleX(0.8562);-webkit-text-stroke:0.5px;">21</span>
<span id="t86" class="t" style="left:38.70px;transform-origin:0 50%;top:135.81px;font-size:7.4px;color:#333;font-weight:normal;-webkit-text-stroke:0.3px;transform:scaleX(1.0779);">Packages To be Shipped</span>
<svg style="left:164.60px;top:127.20px;" width="5" height="7.6" viewBox="0 0 5 7.6"><path d="M1 0.8 L4 3.8 L1 6.8" fill="none" stroke="#c8c8cc" stroke-width="0.9"/></svg>
<div style="left:4.10px;top:154.60px;width:174.50px;height:39.40px;background:#fff;border-radius:3px;"></div>
<div style="left:9.00px;top:163.60px;width:21.40px;height:21.40px;background:#fba741;border-radius:50%;"></div>
<svg style="left:14.20px;top:168.80px;" width="11" height="11" viewBox="0 0 11 11"><circle cx="5.5" cy="5.5" r="4.6" fill="#fff"/><path d="M3.4 5.6 L5 7.2 L7.8 4" fill="none" stroke="#fba741" stroke-width="1.1"/></svg>
<span id="t87" class="t" style="left:38.70px;transform-origin:0 50%;top:162.79px;font-size:12.6px;color:#111;font-weight:normal;-webkit-text-stroke:0.3px;transform:scaleX(0.8919);-webkit-text-stroke:0.5px;">14</span>
<span id="t88" class="t" style="left:38.70px;transform-origin:0 50%;top:179.61px;font-size:7.4px;color:#333;font-weight:normal;-webkit-text-stroke:0.3px;transform:scaleX(1.0789);">Packages To be Delivered</span>
<svg style="left:164.60px;top:171.00px;" width="5" height="7.6" viewBox="0 0 5 7.6"><path d="M1 0.8 L4 3.8 L1 6.8" fill="none" stroke="#c8c8cc" stroke-width="0.9"/></svg>
<div style="left:4.10px;top:198.10px;width:174.50px;height:39.40px;background:#fff;border-radius:3px;"></div>
<div style="left:9.00px;top:207.10px;width:21.40px;height:21.40px;background:#5fd08c;border-radius:50%;"></div>
<svg style="left:15.10px;top:211.90px;" width="9.5" height="12" viewBox="0 0 9.5 12"><path d="M0.8 0.6 H6 L8.6 3.2 V11.2 H0.8 Z" fill="#fff"/><path d="M2.6 5.4 H6.8 M2.6 7.2 H6.8 M2.6 9 H6.8" stroke="#5fd08c" stroke-width="0.7"/></svg>
<span id="t89" class="t" style="left:38.70px;transform-origin:0 50%;top:206.29px;font-size:12.6px;color:#111;font-weight:normal;-webkit-text-stroke:0.3px;transform:scaleX(1.0081);-webkit-text-stroke:0.5px;">20833.2</span>
<span id="t90" class="t" style="left:38.70px;transform-origin:0 50%;top:223.11px;font-size:7.4px;color:#333;font-weight:normal;-webkit-text-stroke:0.3px;transform:scaleX(1.1088);">Quantity To be Invoiced</span>
<svg style="left:164.60px;top:214.50px;" width="5" height="7.6" viewBox="0 0 5 7.6"><path d="M1 0.8 L4 3.8 L1 6.8" fill="none" stroke="#c8c8cc" stroke-width="0.9"/></svg>
<span id="t91" class="t" style="left:4.40px;transform-origin:0 50%;top:256.10px;font-size:10px;color:#222;font-weight:normal;transform:scaleX(0.9746);">Inventory Summary</span>
<span id="t92" class="t" style="left:90.80px;transform-origin:0 50%;top:259.16px;font-size:6.4px;color:#333;font-weight:normal;transform:scaleX(1.0093);">(In Quantity)</span>
<div style="left:4.40px;top:275.60px;width:79.10px;height:43.40px;background:#fff;border-radius:3px;"></div>
<div style="left:90.50px;top:275.60px;width:88.10px;height:43.40px;background:#fff;border-radius:3px;"></div>
<div style="left:10.50px;top:284.50px;width:1.20px;height:24.40px;background:#4a8df0;"></div>
<div style="left:96.60px;top:284.50px;width:1.20px;height:24.40px;background:#f08a3c;"></div>
<span id="t93" class="t" style="left:16.10px;transform-origin:0 50%;top:285.39px;font-size:6.6px;color:#333;font-weight:normal;-webkit-text-stroke:0.3px;transform:scaleX(1.0688);">In Hand</span>
<span id="t94" class="t" style="left:16.10px;transform-origin:0 50%;top:297.54px;font-size:11.6px;color:#111;font-weight:normal;-webkit-text-stroke:0.3px;transform:scaleX(1.0582);-webkit-text-stroke:0.5px;">1046044...</span>
<span id="t95" class="t" style="left:102.60px;transform-origin:0 50%;top:285.39px;font-size:6.6px;color:#333;font-weight:normal;-webkit-text-stroke:0.3px;transform:scaleX(1.0609);">To Be Received</span>
<span id="t96" class="t" style="left:102.60px;transform-origin:0 50%;top:297.54px;font-size:11.6px;color:#111;font-weight:normal;-webkit-text-stroke:0.3px;transform:scaleX(1.0960);-webkit-text-stroke:0.5px;">356</span>
<span id="t97" class="t" style="left:4.40px;transform-origin:0 50%;top:339.50px;font-size:10px;color:#222;font-weight:normal;transform:scaleX(0.9762);">Product Details</span>
<div style="left:-0.90px;top:357.20px;width:185.00px;height:37.00px;background:#f5f5f7;border-top:1px solid #dcdce0;"></div>
<span id="t98" class="t" style="left:6.76px;transform-origin:50% 50%;top:375.49px;font-size:4.6px;color:#d63c2f;font-weight:normal;">Dashboard</span>
<span id="t99" class="t" style="left:40.99px;transform-origin:50% 50%;top:375.49px;font-size:4.6px;color:#555;font-weight:normal;">Sales Orders</span>
<span id="t100" class="t" style="left:80.71px;transform-origin:50% 50%;top:375.49px;font-size:4.6px;color:#555;font-weight:normal;">Packages</span>
<span id="t101" class="t" style="left:121.98px;transform-origin:50% 50%;top:375.49px;font-size:4.6px;color:#555;font-weight:normal;">Items</span>
<span id="t102" class="t" style="left:159.07px;transform-origin:50% 50%;top:375.49px;font-size:4.6px;color:#555;font-weight:normal;">More</span>
<svg style="left:12.60px;top:361.80px;" width="11" height="10" viewBox="0 0 11 10"><path d="M0.8 6.2 Q0.8 0.8 5.5 0.8 Q10.2 0.8 10.2 6.2 V8 Q10.2 9.2 9 9.2 H2 Q0.8 9.2 0.8 8 Z" fill="#d63c2f"/><path d="M3.4 7.2 Q3.4 4.4 5.5 4.4 Q7.6 4.4 7.6 7.2" fill="none" stroke="#fff" stroke-width="0.7"/></svg>
<svg style="left:48.40px;top:361.20px;" width="12" height="11" viewBox="0 0 12 11"><path d="M0.6 1 H2.4 L3.8 7 H9.8 L11 2.8 H3" fill="none" stroke="#555" stroke-width="0.7"/><circle cx="4.8" cy="9.2" r="0.9" fill="none" stroke="#555" stroke-width="0.6"/><circle cx="9" cy="9.2" r="0.9" fill="none" stroke="#555" stroke-width="0.6"/></svg>
<svg style="left:86.10px;top:362.20px;" width="10" height="10" viewBox="0 0 10 10"><rect x="1" y="1" width="8" height="8" rx="0.8" fill="none" stroke="#555" stroke-width="0.7"/><path d="M3.6 1 V3.8 H6.4 V1" fill="none" stroke="#555" stroke-width="0.7"/></svg>
<svg style="left:122.10px;top:361.60px;" width="11" height="10.5" viewBox="0 0 11 10.5"><path d="M0.8 4.2 H10.2 L9.2 9.6 H1.8 Z M3 4.2 L5.5 1 L8 4.2 M4 6.8 H7" fill="none" stroke="#555" stroke-width="0.7"/></svg>
<svg style="left:159.10px;top:365.20px;" width="11" height="4" viewBox="0 0 11 4"><circle cx="1.8" cy="2" r="1.1" fill="none" stroke="#555" stroke-width="0.6"/><circle cx="5.5" cy="2" r="1.1" fill="none" stroke="#555" stroke-width="0.6"/><circle cx="9.2" cy="2" r="1.1" fill="none" stroke="#555" stroke-width="0.6"/></svg></div>
<div style="left:1069.40px;top:323.00px;width:102.00px;height:17.60px;background:#0c0c0e;border-radius:0 0 11px 11px;"></div>
<div style="left:1107.50px;top:328.60px;width:25.00px;height:2.60px;background:#2a2a2e;border-radius:2px;"></div>
<div style="left:1140.40px;top:328.00px;width:4.60px;height:4.60px;background:#26355a;border-radius:50%;"></div>
<svg style="left:1054.60px;top:702.00px;" width="30" height="34" viewBox="0 0 30 34"><defs><filter id="wsh" x="-20%" y="-20%" width="140%" height="140%"><feDropShadow dx="0.8" dy="0.8" stdDeviation="0.9" flood-color="#000" flood-opacity="0.55"/></filter></defs><g filter="url(#wsh)"><ellipse cx="4.2" cy="12.4" rx="3.1" ry="4.2" fill="#fff" transform="rotate(-18 4.2 12.4)"/><ellipse cx="10.6" cy="5.2" rx="3.2" ry="4.4" fill="#fff" transform="rotate(-6 10.6 5.2)"/><ellipse cx="18.4" cy="5.2" rx="3.2" ry="4.4" fill="#fff" transform="rotate(8 18.4 5.2)"/><ellipse cx="24.6" cy="12.2" rx="3.1" ry="4.2" fill="#fff" transform="rotate(20 24.6 12.2)"/><path d="M14.4 13.4 Q18.6 13.4 21.8 18.6 Q26.8 24.4 23.8 28.8 Q20.8 32.2 14.4 30.6 Q8 32.2 5 28.8 Q2 24.4 7 18.6 Q10.2 13.4 14.4 13.4 Z" fill="#fff"/></g><text x="14.4" y="26.7" font-family="Liberation Sans" font-weight="bold" font-size="12.5" fill="#1c1c1c" text-anchor="middle">du</text></svg>
<span id="t103" class="t" style="left:1084.60px;transform-origin:0 50%;top:697.30px;font-size:38px;color:#fff;font-weight:normal;text-shadow:0.8px 0.8px 1.6px rgba(0,0,0,.6);">@</span>
<svg style="left:1122.40px;top:700.40px;" width="31" height="31" viewBox="0 0 31 31"><defs><filter id="wsh" x="-20%" y="-20%" width="140%" height="140%"><feDropShadow dx="0.8" dy="0.8" stdDeviation="0.9" flood-color="#000" flood-opacity="0.55"/></filter></defs><g filter="url(#wsh)"><path fill="none" stroke="#fff" stroke-width="2.3" stroke-linecap="square" d="M6 1.6 L2.4 8 M4.6 4.8 H13.4 M8.6 5.4 L10 8.6 M19.6 1.6 L16 8 M18.2 4.8 H28.4 M22.4 5.4 L23.8 8.6 M4.4 10.6 L6.2 13.2 M3.2 14.4 V29.4 M9.6 12.2 H27.2 V27.6 Q27.2 29.2 24 28.8 M10.4 16.4 H21 V26 H10.4 Z M10.4 21.2 H21"/></g></svg>
<svg style="left:1156.40px;top:700.40px;" width="31" height="31" viewBox="0 0 31 31"><defs><filter id="wsh" x="-20%" y="-20%" width="140%" height="140%"><feDropShadow dx="0.8" dy="0.8" stdDeviation="0.9" flood-color="#000" flood-opacity="0.55"/></filter></defs><g filter="url(#wsh)"><path fill="none" stroke="#fff" stroke-width="2.3" stroke-linecap="square" d="M13.2 1.4 L15 4.4 M23.6 1.4 L21.6 4.4 M9 6.6 H29 M18.4 6.8 L17.2 9.8 M12 10.2 H26 V23.6 H12 Z M12 14.6 H26 M12 19 H26 M3 3.4 L6 6.8 M1 12.2 H6.2 V21.6 L2 26.6 M5.2 23.2 Q8 28 14 28 H29.6"/></g></svg>
<svg style="left:1186.60px;top:700.40px;" width="31" height="31" viewBox="0 0 31 31"><defs><filter id="wsh" x="-20%" y="-20%" width="140%" height="140%"><feDropShadow dx="0.8" dy="0.8" stdDeviation="0.9" flood-color="#000" flood-opacity="0.55"/></filter></defs><g filter="url(#wsh)"><path fill="none" stroke="#fff" stroke-width="2.3" stroke-linecap="square" d="M6.4 5.4 H24 M1 14 H29.4 M13.4 14.4 L5.4 26.6 L24.6 25 M20.4 18.6 L27.6 28.6"/></g></svg>
</body></html>
